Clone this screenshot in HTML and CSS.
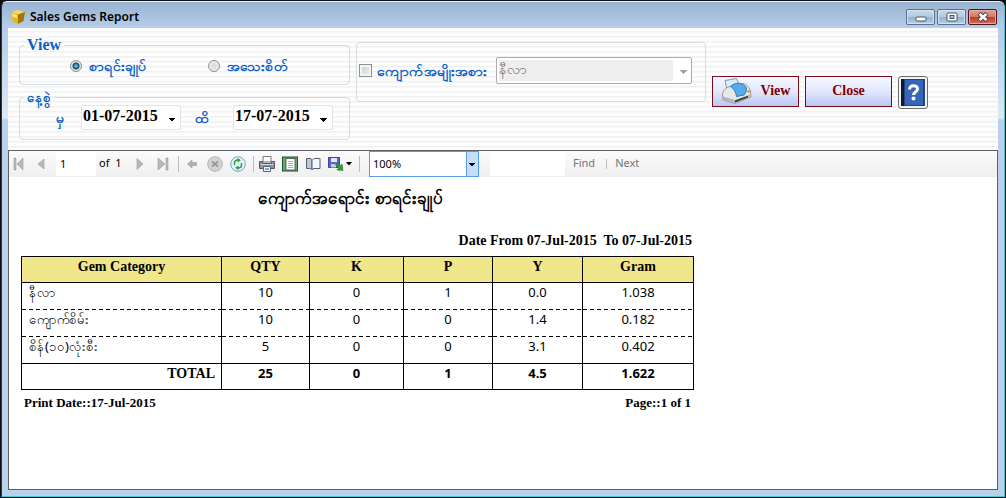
FILE: index.html
```
<!DOCTYPE html>
<html lang="my">
<head>
<meta charset="utf-8">
<title>Sales Gems Report</title>
<link rel="stylesheet" href="styles.css">
</head>
<body>
<div class="window">
  <header class="titlebar">
    <svg class="app-icon" viewBox="0 0 14 14" width="14" height="14"><path d="M1 2 7 0l6 2-6 2.500z" fill="#f7dc57"/><path d="M0 2l7 2.500V14L1.500 11z" fill="#e8b80f"/><path d="M14 2 7 4.500V14l5.500-3z" fill="#a87400"/><path d="M1 3l5 2v3L1.500 7z" fill="#f9e27a"/></svg>
    <h1 class="title">Sales Gems Report</h1>
    <div class="window-buttons">
      <button class="wb" type="button" aria-label="Minimize"><svg viewBox="0 0 12 12" width="12" height="12"><rect x="1" y="6" width="10" height="4" rx="1" fill="#fff" stroke="#4c5566"/></svg></button>
      <button class="wb" type="button" aria-label="Maximize"><svg viewBox="0 0 12 12" width="12" height="12"><rect x="1" y="2" width="10" height="8" rx="1" fill="#fff" stroke="#4c5566"/><rect x="4" y="4.500" width="4" height="3" fill="#a9c4de" stroke="#4c5566"/></svg></button>
      <button class="wb wb-close" type="button" aria-label="Close window"><svg viewBox="0 0 12 12" width="12" height="12"><path d="M2 2.500l8 7M10 2.500l-8 7" stroke="#4c4048" stroke-width="4.400"/><path d="M2.500 3l7 6M9.500 3l-7 6" stroke="#fff" stroke-width="2.600"/></svg></button>
    </div>
  </header>
  <main class="client">
    <form class="filters">
      <div class="stack">
        <fieldset class="group">
          <legend class="legend legend-latin">View</legend>
          <div class="options">
            <label class="option"><input type="radio" name="mode" class="radio" checked>စာရင်းချုပ်</label>
            <label class="option"><input type="radio" name="mode" class="radio">အသေးစိတ်</label>
          </div>
        </fieldset>
        <fieldset class="group">
          <legend class="legend">နေ့စွဲ</legend>
          <div class="dates">
            <label class="date-label" for="from">မှ</label>
            <select id="from" class="date"><option>01-07-2015</option></select>
            <label class="date-label date-label-to" for="to">ထိ</label>
            <select id="to" class="date"><option>17-07-2015</option></select>
          </div>
        </fieldset>
      </div>
      <fieldset class="group group-gem" aria-label="Gem category">
        <label class="check-label" for="by-gem"><input id="by-gem" type="checkbox" class="check">ကျောက်အမျိုးအစား</label>
        <select class="gem-select" aria-label="Gem" disabled><option>နီလာ</option></select>
      </fieldset>
      <div class="actions">
        <button class="action" type="button"><svg viewBox="0 0 32 28" width="32" height="28"><path d="M4 3.500 15.500 1.500 19 10 6 13z" fill="#d9edfa" stroke="#7b9ab0"/><path d="M1.500 18c0-4 3-7 7-8.500L20 6.500c5-.5 8 3 9.500 7.500l.5 6-16 6.500-12-3.500z" fill="#e6e8ea" stroke="#96999c"/><path d="M9.500 9.500C14 5 22 5 25.500 11c0 3-1 5.500-2.500 7l-7.500 1.500C15 15.500 13 11.500 9.500 9.500z" fill="#55ace9" stroke="#2d7cc0"/><path d="M2 19.500l12 3.500 16-6v3l-16 6.500-12-3.500z" fill="#b3b6b9"/><path d="M14 23.500l13-4.700v1.700l-13 5z" fill="#3a3a3a"/><circle cx="27.500" cy="14.500" r="1.300" fill="#f08a1c"/></svg>View</button>
        <button class="action" type="button">Close</button>
        <button class="help" type="button" aria-label="Help"><svg viewBox="0 0 24 27" width="24" height="27"><rect width="24" height="27" fill="#24447f"/><rect width="3" height="27" fill="#0d1b38"/><rect x="4" y="1" width="18" height="25" fill="#3666b8"/><path d="M8.500 10.500c0-5 8-5 8-.5 0 3-4 3-4 6" fill="none" stroke="#fff" stroke-width="3"/><circle cx="12.500" cy="19.500" r="2" fill="#fff"/></svg></button>
      </div>
    </form>
    <section class="viewer">
      <div class="toolbar">
        <button class="tool" type="button" aria-label="First page"><svg viewBox="0 0 16 16" width="16" height="16"><path d="M1 2h2v12H1zM10 2v12L4 8z" fill="#b9b9b9" stroke="#9a9a9a" stroke-width=".6"/></svg></button>
        <button class="tool" type="button" aria-label="Previous page"><svg viewBox="0 0 16 16" width="16" height="16"><path d="M8 3v10L2 8z" fill="#b9b9b9" stroke="#9a9a9a" stroke-width=".6"/></svg></button>
        <input class="page-no" type="text" value="1" aria-label="Page">
        <span class="page-count">of&nbsp; 1</span>
        <button class="tool" type="button" aria-label="Next page"><svg viewBox="0 0 16 16" width="16" height="16"><path d="M5 2.500v11L11 8z" fill="#b9b9b9" stroke="#9a9a9a" stroke-width=".6"/></svg></button>
        <button class="tool" type="button" aria-label="Last page"><svg viewBox="0 0 16 16" width="16" height="16"><path d="M11 2h2v12h-2zM3 2v12l7-6z" fill="#b9b9b9" stroke="#9a9a9a" stroke-width=".6"/></svg></button>
        <span class="sep"></span>
        <button class="tool" type="button" aria-label="Back"><svg viewBox="0 0 16 16" width="16" height="16"><path d="M8 4v2.500h4.500v3H8V12L3.500 8z" fill="#b0b0b0" stroke="#9a9a9a" stroke-width=".6"/></svg></button>
        <button class="tool" type="button" aria-label="Stop"><svg viewBox="0 0 16 16" width="16" height="16"><circle cx="8" cy="8" r="7.300" fill="#d2d2d2" stroke="#b4b4b4"/><path d="M5 5.500l6 5M11 5.500l-6 5" stroke="#999" stroke-width="2"/></svg></button>
        <button class="tool" type="button" aria-label="Refresh"><svg viewBox="0 0 16 16" width="16" height="16"><circle cx="8" cy="8" r="7.300" fill="#e6f3fb" stroke="#6fa5c9"/><path d="M4.500 9V7c0-2 1.500-3 3.500-3M11.500 7v2c0 2-1.500 3-3.500 3" fill="none" stroke="#2f9e3f" stroke-width="1.500"/><path d="M7.500 1.800l3.300 2.400-3.300 2.300zM8.500 14.200l-3.300-2.400 3.300-2.300z" fill="#2f9e3f"/></svg></button>
        <span class="sep"></span>
        <button class="tool" type="button" aria-label="Print"><svg viewBox="0 0 16 16" width="16" height="16"><path d="M4 .5h8V6H4z" fill="#fff" stroke="#777"/><path d="M.5 5.500h3v2h9v-2h3v7H.5z" fill="#8d9096" stroke="#55585e"/><path d="M2 8.500h12" stroke="#d8dade"/><path d="M4.500 10.500h7v5h-7z" fill="#e9f3fa" stroke="#667"/><path d="M6 13h4" stroke="#4aa3dd" stroke-width="1.500"/></svg></button>
        <button class="tool" type="button" aria-label="Print layout"><svg viewBox="0 0 16 16" width="16" height="16"><rect x=".5" y="1" width="15" height="14" fill="#6fa576" stroke="#1f5229"/><rect x="4" y="2.500" width="9" height="11.500" fill="#fff" stroke="#38543c" stroke-width=".8"/><path d="M6 5.500h5M6 7.500h5M6 9.500h5M6 11.500h5" stroke="#999" stroke-width=".8"/></svg></button>
        <button class="tool" type="button" aria-label="Page setup"><svg viewBox="0 0 16 16" width="16" height="16"><path d="M1.500 2.500H5c1.500 0 2 1 2 2v9c-1-1-2-1-3-1H1.500z" fill="#bcc9dc" stroke="#555f70"/><path d="M7 4.500l2-2h6v10H9l-2 1z" fill="#f3f6fa" stroke="#555f70"/></svg></button>
        <button class="tool tool-save" type="button" aria-label="Export"><svg viewBox="0 0 16 16" width="16" height="16"><path d="M.5 1.500h11v10H.5z" fill="#5a68cc" stroke="#39439a"/><path d="M3 2h6v4H3z" fill="#e6eaf8"/><path d="M3 8h5v3.500H3z" fill="#c5cbe8"/><path d="M7.500 8.500l2-1.500 3 2.500L14 8l1 6.500-6-.5 1.500-1.800z" fill="#2ca02c" stroke="#17691b" stroke-width=".5"/></svg><svg viewBox="0 0 6 4" width="6" height="4"><path d="M0 0h6L3 3.500z"/></svg></button>
        <span class="sep"></span>
        <select class="zoom" aria-label="Zoom"><option>100%</option></select>
        <input class="search" type="text" aria-label="Search text">
        <button class="link-tool" type="button">Find</button>
        <span class="bar"></span>
        <button class="link-tool" type="button">Next</button>
      </div>
      <article class="report">
        <h2 class="report-title">ကျောက်အရောင်း စာရင်းချုပ်</h2>
        <p class="range">Date From 07-Jul-2015&nbsp; To 07-Jul-2015</p>
        <table class="gems">
          <colgroup><col class="c-name"><col class="c-qty"><col class="c-k"><col class="c-p"><col class="c-y"><col class="c-gram"></colgroup>
          <thead>
            <tr><th>Gem Category</th><th>QTY</th><th>K</th><th>P</th><th>Y</th><th>Gram</th></tr>
          </thead>
          <tbody>
            <tr><td class="name">နီလာ</td><td>10</td><td>0</td><td>1</td><td>0.0</td><td>1.038</td></tr>
            <tr><td class="name">ကျောက်စိမ်း</td><td>10</td><td>0</td><td>0</td><td>1.4</td><td>0.182</td></tr>
            <tr><td class="name">စိန်(၁၀)လုံးစီး</td><td>5</td><td>0</td><td>0</td><td>3.1</td><td>0.402</td></tr>
          </tbody>
          <tfoot>
            <tr><th class="total">TOTAL</th><td>25</td><td>0</td><td>1</td><td>4.5</td><td>1.622</td></tr>
          </tfoot>
        </table>
        <footer class="report-foot"><span>Print Date::17-Jul-2015</span><span>Page::1 of 1</span></footer>
      </article>
    </section>
  </main>
</div>
</body>
</html>
```

FILE: styles.css
```
* { box-sizing: border-box; }

body {
  margin: 0;
  padding: 1px;
  background: #0b0f14;
  font: 13px/20px "Noto Sans", sans-serif;
  color: #000;
}

button, input, select { font: inherit; color: inherit; margin: 0; padding: 0; }
svg { display: block; flex: none; }

.window {
  display: flex;
  flex-direction: column;
  min-height: calc(100vh - 2px);
  padding: 0 6px 6px;
  border: 1px solid #4fc3d9;
  border-top-color: #e8f1fa;
  border-left-color: #2a3642;
  border-radius: 6px 6px 0 0;
  background: linear-gradient(#98b3d0, #b4cce6 26px, #dde9f5 116px, #b9d1ea 118px);
}

.titlebar {
  display: flex;
  align-items: center;
  gap: 5px;
  margin: 0 -6px;
  padding: 4px 7px 0 9px;
  height: 26px;
  background: linear-gradient(#98b3d0, #b6cee8);
  border-radius: 5px 5px 0 0;
}
.title { flex: 1; margin: 0; font-size: 12px; line-height: 16px; font-weight: 600; }
.window-buttons { display: flex; gap: 2px; }
.wb {
  display: flex;
  align-items: center;
  justify-content: center;
  width: 29px;
  height: 16px;
  border: 1px solid #5b6f8c;
  border-radius: 2px;
  background: linear-gradient(#c8d9ea, #b3c9e0 50%, #94b0cd 50%, #b7cfe8);
  box-shadow: inset 0 0 0 1px #d5e3f1;
}
.wb-close {
  border-color: #4a1420;
  background: linear-gradient(#e3a091, #d37765 50%, #b93c27 50%, #d4705a);
  box-shadow: inset 0 0 0 1px #e9ab9d;
}

.client { flex: 1; display: flex; flex-direction: column; }

.filters {
  display: flex;
  flex-wrap: wrap;
  align-items: flex-start;
  gap: 6px;
  padding: 0 11px 10px;
  color: #0a60c8;
  font-size: 14px;
  font-weight: 700;
  background: repeating-linear-gradient(#fdfdfd 0 3px, #f1f1f1 3px 4px, #f7f7f7 4px 5px);
}
.stack { display: flex; flex-direction: column; gap: 4px; width: 331px; padding-top: 9px; }
.group { min-width: 0; margin: 0; padding: 0 4px; border: 1px solid #d3dde3; border-radius: 4px; }
.legend { padding: 0 3px; font-size: 13px; line-height: 16px; }
.legend-latin { font-family: "Liberation Serif", serif; font-size: 16px; }

.options { display: flex; padding: 3px 0 8px 46px; }
.option { display: flex; align-items: center; gap: 7px; width: 138px; }
.radio {
  appearance: none;
  width: 12px;
  height: 12px;
  border: 1px solid #8e8f8f;
  border-radius: 50%;
  background: radial-gradient(#d4d8dc, #f6f6f6);
}
.radio:checked { background: radial-gradient(circle, #58b9dc 0 1px, #12405f 3px, #e4e8ea 4px); }

.dates { display: flex; align-items: center; padding: 0 0 9px 32px; }
.date-label { width: 25px; }
.date-label-to { width: 52px; padding-left: 14px; }
.date {
  appearance: none;
  width: 100px;
  height: 25px;
  padding: 0 0 3px 1px;
  border: 1px solid #dfe5ea;
  border-radius: 2px;
  color: #000;
  font: 700 16px/20px "Liberation Serif", serif;
  background:
    conic-gradient(from -45deg at 50% 100%, #000 90deg, transparent 0) right 4px top 12px / 8px 4px no-repeat,
    #fff;
}

.group-gem { display: flex; align-items: center; width: 350px; margin-top: 14px; padding: 14px 13px 17px 2px; }
.check-label { display: flex; align-items: center; gap: 5px; white-space: nowrap; }
.check {
  appearance: none;
  width: 13px;
  height: 13px;
  border: 1px solid #8e8f8f;
  background: linear-gradient(135deg, #c4c8cc, #f6f6f6);
  box-shadow: inset 0 0 0 2px #f4f4f4;
}
.gem-select {
  appearance: none;
  width: 196px;
  height: 27px;
  margin-left: auto;
  padding: 0 2px 4px;
  border: 1px solid #acacac;
  border-radius: 2px;
  color: #6d6d6d;
  opacity: 1;
  font-size: 14px;
  font-weight: 400;
  background:
    conic-gradient(from -45deg at 50% 100%, #a0a0a0 90deg, transparent 0) right 4px top 12px / 8px 4px no-repeat,
    linear-gradient(#eee, #eee) 2px 2px / 174px 21px no-repeat,
    #fff;
}

.actions { display: flex; gap: 6px; padding-top: 48px; }
.action {
  display: flex;
  align-items: center;
  justify-content: center;
  gap: 8px;
  width: 87px;
  height: 31px;
  padding-bottom: 2px;
  border: 1px solid #7a0c18;
  color: #7f0000;
  font: 700 14px/20px "Liberation Serif", serif;
  background: linear-gradient(#f6f7ff, #e3e8fd 50%, #b9c6f4);
}
.help {
  display: flex;
  align-items: center;
  justify-content: center;
  width: 30px;
  height: 33px;
  border: 1px solid #6d6d6d;
  border-radius: 3px;
  background: #f3f3f3;
}

.viewer { flex: 1; border: 1px solid #5d6069; background: #fff; }

.toolbar {
  display: flex;
  align-items: center;
  height: 26px;
  font-size: 11px;
  line-height: 16px;
  background: linear-gradient(#fbfbfb, #efefef);
}
.tool {
  display: flex;
  align-items: center;
  justify-content: center;
  gap: 2px;
  width: 23px;
  height: 24px;
  border: 0;
  background: none;
}
.tool-save { width: 31px; }
.page-no { width: 40px; height: 24px; margin-left: 1px; padding: 0 4px 2px; border: 0; background: #fff; }
.page-count { width: 32px; padding: 0 0 2px 3px; white-space: nowrap; }
.sep { width: 1px; height: 16px; margin: 0 1px 0 4px; background: #bdbdbd; }
.zoom {
  appearance: none;
  width: 110px;
  height: 26px;
  margin-left: 8px;
  padding: 0 3px;
  border: 1px solid #569de5;
  border-radius: 0;
  background:
    conic-gradient(from -45deg at 50% 100%, #000 90deg, transparent 0) right 3px top 11px / 6px 3px no-repeat,
    linear-gradient(90deg, #569de5 1px, #c4defc 1px) right / 12px 100% no-repeat,
    #fff;
}
.search { width: 75px; height: 24px; margin-left: 11px; border: 0; background: #fff; }
.link-tool { margin-left: 8px; padding-bottom: 2px; border: 0; background: none; color: #757575; }
.bar { width: 1px; height: 10px; margin-left: 11px; background: #bdbdbd; }

.report {
  max-width: 697px;
  padding: 9px 12px;
  font-family: "Liberation Serif", serif;
}
.report-title {
  margin: 0;
  padding-right: 14px;
  font: 700 17px/24px "Noto Sans", sans-serif;
  text-align: center;
}
.range { margin: 23px 2px 7px; font-size: 14px; line-height: 16px; font-weight: 700; text-align: right; }

.gems { width: 100%; table-layout: fixed; border-collapse: collapse; border: 1px solid #000; }
.c-name { width: 200px; }
.c-qty { width: 88px; }
.c-k { width: 94px; }
.c-p { width: 89px; }
.c-y { width: 90px; }
.gems th, .gems td {
  height: 27px;
  padding: 0 6px;
  border: solid #000;
  border-width: 0 1px;
  vertical-align: top;
  text-align: center;
  line-height: 20px;
}
.gems td { font-family: "Noto Sans", sans-serif; font-size: 13px; line-height: 18px; }
.gems th { font-size: 14px; font-weight: 700; }
.gems thead th { height: 26px; border-bottom-width: 1px; background: #f0e68c; }
.gems tbody tr:not(:last-child) td {
  background: repeating-linear-gradient(90deg, #000 0 4px, transparent 4px 7px) bottom / 100% 1px no-repeat;
}
.gems td.name { padding-left: 7px; text-align: left; white-space: nowrap; }
.gems tfoot th, .gems tfoot td { height: 26px; border-top-width: 1px; font-weight: 700; }
.gems tfoot th.total { text-align: right; }

.report-foot {
  display: flex;
  justify-content: space-between;
  padding: 5px 3px;
  font-size: 13px;
  line-height: 16px;
  font-weight: 700;
}
```
